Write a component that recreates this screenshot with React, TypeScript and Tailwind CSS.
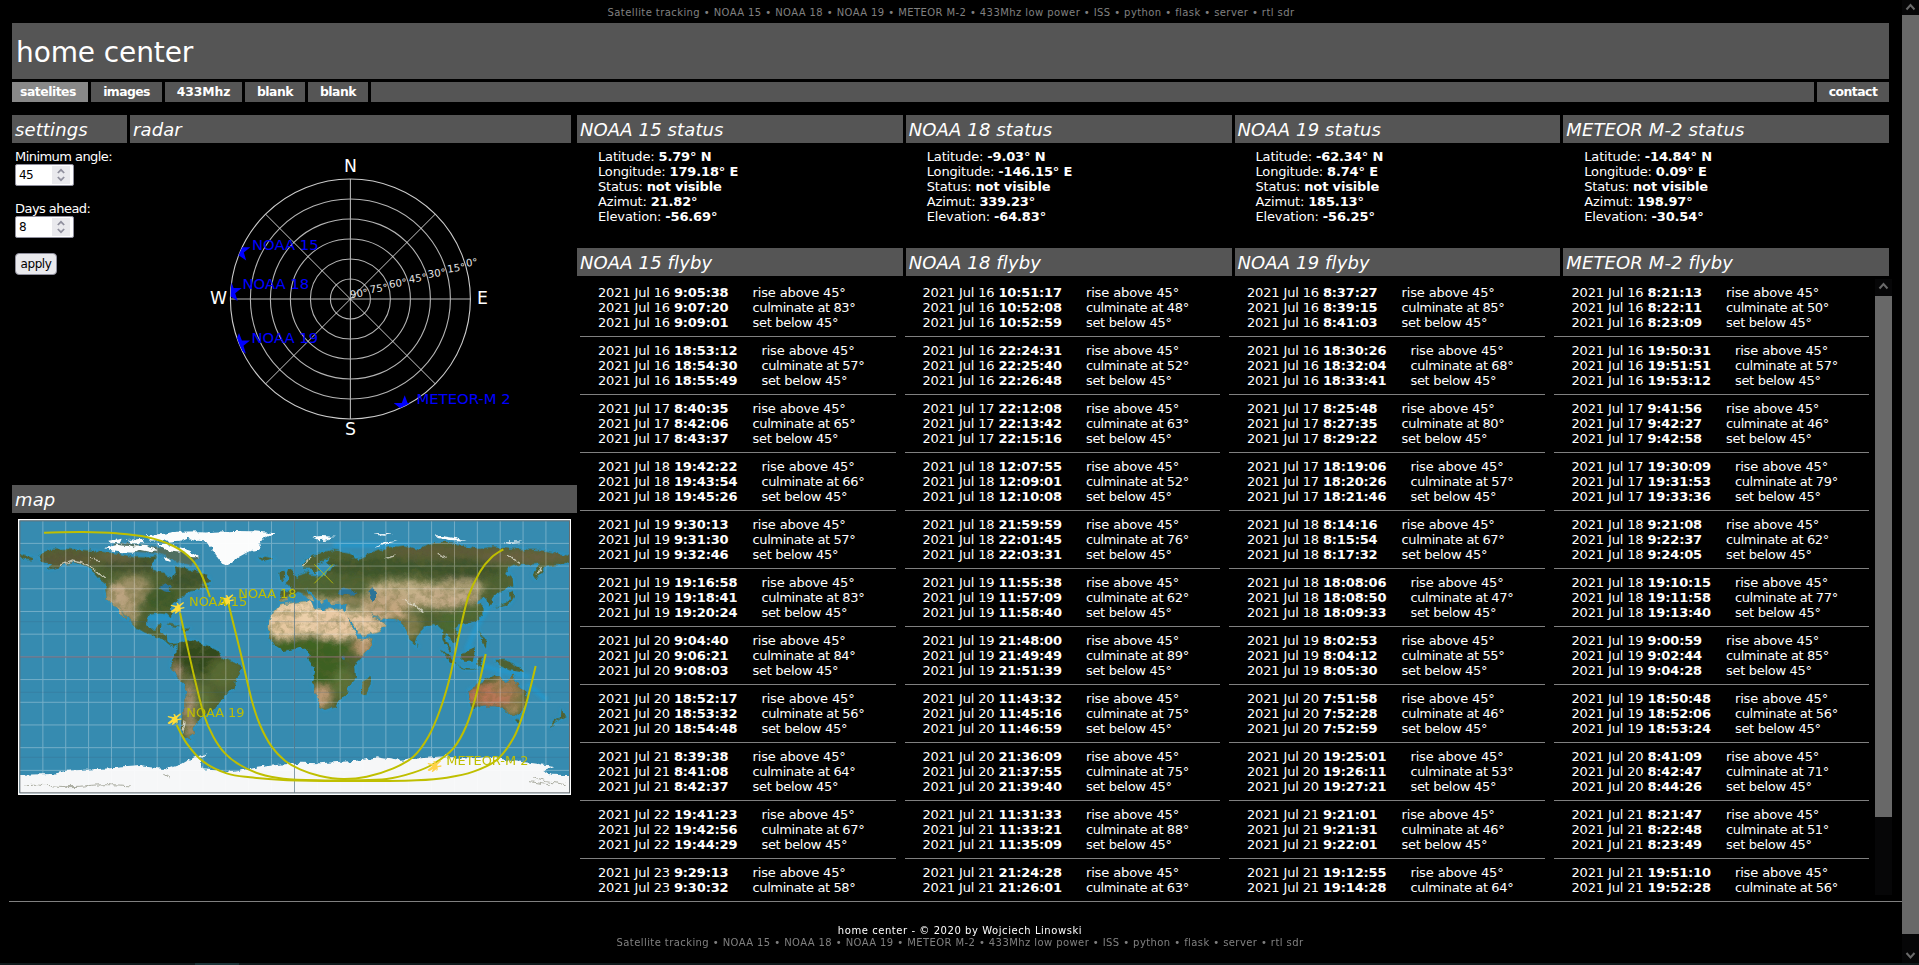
import React from "react";

const TAGS =
  "Satellite tracking • NOAA 15 • NOAA 18 • NOAA 19 • METEOR M-2 • 433Mhz low power • ISS • python • flask • server • rtl sdr";

type Pass = [day: string, rise: string, culminate: string, set: string | null, angle: number];

interface Satellite {
  name: string;
  lat: string;
  lon: string;
  azimut: string;
  elevation: string;
  passes: Pass[];
}

const SATELLITES: Satellite[] = [
  {
    name: "NOAA 15", lat: "5.79", lon: "179.18", azimut: "21.82", elevation: "-56.69",
    passes: [
      ["16", "9:05:38", "9:07:20", "9:09:01", 83],
      ["16", "18:53:12", "18:54:30", "18:55:49", 57],
      ["17", "8:40:35", "8:42:06", "8:43:37", 65],
      ["18", "19:42:22", "19:43:54", "19:45:26", 66],
      ["19", "9:30:13", "9:31:30", "9:32:46", 57],
      ["19", "19:16:58", "19:18:41", "19:20:24", 83],
      ["20", "9:04:40", "9:06:21", "9:08:03", 84],
      ["20", "18:52:17", "18:53:32", "18:54:48", 56],
      ["21", "8:39:38", "8:41:08", "8:42:37", 64],
      ["22", "19:41:23", "19:42:56", "19:44:29", 67],
      ["23", "9:29:13", "9:30:32", null, 58],
    ],
  },
  {
    name: "NOAA 18", lat: "-9.03", lon: "-146.15", azimut: "339.23", elevation: "-64.83",
    passes: [
      ["16", "10:51:17", "10:52:08", "10:52:59", 48],
      ["16", "22:24:31", "22:25:40", "22:26:48", 52],
      ["17", "22:12:08", "22:13:42", "22:15:16", 63],
      ["18", "12:07:55", "12:09:01", "12:10:08", 52],
      ["18", "21:59:59", "22:01:45", "22:03:31", 76],
      ["19", "11:55:38", "11:57:09", "11:58:40", 62],
      ["19", "21:48:00", "21:49:49", "21:51:39", 89],
      ["20", "11:43:32", "11:45:16", "11:46:59", 75],
      ["20", "21:36:09", "21:37:55", "21:39:40", 75],
      ["21", "11:31:33", "11:33:21", "11:35:09", 88],
      ["21", "21:24:28", "21:26:01", null, 63],
    ],
  },
  {
    name: "NOAA 19", lat: "-62.34", lon: "8.74", azimut: "185.13", elevation: "-56.25",
    passes: [
      ["16", "8:37:27", "8:39:15", "8:41:03", 85],
      ["16", "18:30:26", "18:32:04", "18:33:41", 68],
      ["17", "8:25:48", "8:27:35", "8:29:22", 80],
      ["17", "18:19:06", "18:20:26", "18:21:46", 57],
      ["18", "8:14:16", "8:15:54", "8:17:32", 67],
      ["18", "18:08:06", "18:08:50", "18:09:33", 47],
      ["19", "8:02:53", "8:04:12", "8:05:30", 55],
      ["20", "7:51:58", "7:52:28", "7:52:59", 46],
      ["20", "19:25:01", "19:26:11", "19:27:21", 53],
      ["21", "9:21:01", "9:21:31", "9:22:01", 46],
      ["21", "19:12:55", "19:14:28", null, 64],
    ],
  },
  {
    name: "METEOR M-2", lat: "-14.84", lon: "0.09", azimut: "198.97", elevation: "-30.54",
    passes: [
      ["16", "8:21:13", "8:22:11", "8:23:09", 50],
      ["16", "19:50:31", "19:51:51", "19:53:12", 57],
      ["17", "9:41:56", "9:42:27", "9:42:58", 46],
      ["17", "19:30:09", "19:31:53", "19:33:36", 79],
      ["18", "9:21:08", "9:22:37", "9:24:05", 62],
      ["18", "19:10:15", "19:11:58", "19:13:40", 77],
      ["19", "9:00:59", "9:02:44", "9:04:28", 85],
      ["19", "18:50:48", "18:52:06", "18:53:24", 56],
      ["20", "8:41:09", "8:42:47", "8:44:26", 71],
      ["21", "8:21:47", "8:22:48", "8:23:49", 51],
      ["21", "19:51:10", "19:52:28", null, 56],
    ],
  },
];

function Heading({ children, className = "" }: { children: React.ReactNode; className?: string }) {
  return (
    <h2 className={`h-7 shrink-0 overflow-hidden bg-[#555] pl-[3px] text-[18px] leading-[29px] tracking-[0.12px] whitespace-nowrap italic ${className}`}>
      {children}
    </h2>
  );
}

function Tab({ label, className }: { label: string; className: string }) {
  return (
    <a className={`flex h-5 items-center justify-center pt-px text-[12.4px] font-bold ${className}`}>{label}</a>
  );
}

function NumberField({ label, value }: { label: string; value: string }) {
  return (
    <label className="flex flex-col items-start">
      <span className="h-[15px] leading-[15px] tracking-[-0.55px] whitespace-nowrap">{label}</span>
      <span className="flex h-[22px] w-[59px] items-center justify-between rounded-[2px] border border-[#8f8f9d] bg-white pr-[3px] pl-[3px] text-black">
        <span className="text-[12px] tracking-[-0.6px]">{value}</span>
        <span className="flex h-[18px] w-[18px] items-center justify-center bg-[#e9e9ed]">
          <svg viewBox="0 0 18 18" className="h-[18px] w-[18px]" fill="none" stroke="#8f8f9d" strokeWidth="1.7">
            <path d="M5.8 7 9 3.8 12.2 7M5.8 11 9 14.2 12.2 11" />
          </svg>
        </span>
      </span>
    </label>
  );
}

const STAR =
  "M0,-11.4 2.9,-3.8 11,-3.7 4.5,1.5 6.9,9.4 0,4.7 -6.9,9.4 -4.5,1.5 -11,-3.7 -2.9,-3.8Z";

function Radar() {
  const cx = 220.4;
  const cy = 156;
  const marks: [number, number, string][] = [
    [220.5, 155.2, "90°"], [240.3, 150.2, "75°"], [259.5, 145, "60°"],
    [279.3, 140, "45°"], [298.3, 135, "30°"], [317.8, 129.7, "15°"], [336.6, 123.8, "0°"],
  ];
  return (
    <svg viewBox="0 0 441 342" className="h-[342px] w-[441px] tracking-normal" fontFamily="DejaVu Sans">
      <defs>
        <clipPath id="dial"><circle cx={cx} cy={cy} r="120" /></clipPath>
      </defs>
      <g fill="none" stroke="#b4b4b4" strokeWidth="1.1">
        {[20, 40, 60, 80, 100].map((r) => <circle key={r} cx={cx} cy={cy} r={r} />)}
        <path d={`M${cx - 120},${cy}H${cx + 120}M${cx},${cy - 120}V${cy + 120}`} />
        <path d={`M${cx - 85},${cy - 85}l170,170M${cx - 85},${cy + 85}l170,-170`} stroke="#ddd" strokeWidth="0.9" />
        <circle cx={cx} cy={cy} r="120" stroke="#ccc" />
      </g>
      <g fill="#fff" fontSize="17.3" textAnchor="middle">
        <text x={cx} y="29">N</text>
        <text x={cx} y="292">S</text>
        <text x="88.5" y="160.5">W</text>
        <text x="352.5" y="160.5">E</text>
      </g>
      <g fill="#e6e6e6" fontSize="10.2">
        {marks.map(([x, y, t]) => (
          <text key={t} x={x} y={y} transform={`rotate(-8 ${x} ${y})`}>{t}</text>
        ))}
      </g>
      <g fill="#0000ff" clipPath="url(#dial)">
        <path d={STAR} transform="translate(109.3 108)" />
        <path d={STAR} transform="translate(100.7 148.7)" />
        <path d={STAR} transform="translate(109 201.3)" />
        <path d={STAR} transform="translate(274.7 263.7)" />
      </g>
      <g fill="#0000ff" fontSize="14.8">
        <text x="122" y="107">NOAA 15</text>
        <text x="112.5" y="145.7">NOAA 18</text>
        <text x="121.5" y="199.5">NOAA 19</text>
        <text x="286.5" y="261.3">METEOR-M 2</text>
      </g>
    </svg>
  );
}

function smooth(points: number[][]) {
  let d = `M${points[0][0]},${points[0][1]}`;
  for (let i = 0; i < points.length - 1; i++) {
    const p0 = points[Math.max(i - 1, 0)];
    const p1 = points[i];
    const p2 = points[i + 1];
    const p3 = points[Math.min(i + 2, points.length - 1)];
    d += `C${p1[0] + (p2[0] - p0[0]) / 6},${p1[1] + (p2[1] - p0[1]) / 6} ${p2[0] - (p3[0] - p1[0]) / 6},${p2[1] - (p3[1] - p1[1]) / 6} ${p2[0]},${p2[1]}`;
  }
  return d;
}

const ORBITS: number[][][] = [
  [[132, 188], [250, 186], [350, 190], [440, 201], [520, 228], [575, 268], [605, 315], [630, 381]],
  [[540, 428], [560, 520], [585, 630], [612, 735], [640, 800], [675, 850], [720, 885], [780, 912], [850, 926], [950, 931], [1060, 931], [1160, 927], [1240, 908], [1300, 882], [1360, 835], [1400, 765], [1430, 670], [1457, 552]],
  [[685, 400], [722, 550], [755, 690], [780, 765], [815, 830], [855, 872], [900, 898], [960, 918], [1030, 927], [1100, 920], [1180, 895], [1240, 860], [1285, 800], [1320, 720], [1350, 620], [1378, 490], [1405, 380], [1440, 305], [1475, 262], [1510, 238]],
  [[530, 765], [560, 820], [610, 875], [680, 910], [750, 922], [850, 930], [1000, 933], [1150, 933], [1250, 931], [1340, 923], [1420, 905], [1490, 870], [1540, 805], [1570, 730], [1592, 650], [1607, 588]],
];

const WEST_LAND =
  "M118,262 125,250 150,240 195,237 240,240 285,243 320,248 360,252 400,262 440,262 475,258 455,280 458,300 490,312 515,325 528,308 525,285 545,290 575,302 600,305 625,320 630,335 600,345 630,348 600,357 570,365 545,380 520,398 508,412 515,430 513,445 500,432 475,430 450,433 440,445 438,465 450,480 462,478 470,465 485,462 480,480 478,490 500,493 502,510 515,522 532,520 525,530 505,522 490,508 465,498 435,488 405,470 385,445 365,415 357,402 372,430 380,450 362,435 348,410 338,400 320,385 316,360 318,340 300,328 285,310 265,293 240,282 215,275 190,285 165,295 140,298 145,290 155,282 125,274Z" +
  "M530,520 548,512 575,511 600,518 628,530 655,545 665,565 695,574 722,588 722,602 706,628 700,655 672,675 655,700 635,725 613,735 600,745 590,765 578,775 583,790 566,800 575,812 548,800 544,780 550,740 556,700 558,660 550,640 530,622 514,592 516,570 530,548Z" +
  "M60,250 100,262 90,268 60,262Z M500,460 530,465 545,472 515,468Z M545,474 568,476 560,482 545,480Z" +
  "M838,312 855,305 856,325 842,331Z M865,295 878,300 890,330 862,337 868,322 860,310Z M775,264 795,260 820,265 800,274 778,270Z" +
  "M805,480 808,450 830,420 845,402 880,398 930,393 937,410 970,422 985,413 1025,420 1037,432 1060,477 1082,508 1118,508 1110,532 1085,562 1065,585 1068,622 1045,647 1040,670 1020,690 1008,708 975,719 963,713 952,688 938,642 945,610 945,590 925,565 927,545 910,532 890,535 850,541 825,525 808,500Z" +
  "M1085,670 1088,642 1108,620 1112,638 1098,676Z";

const EAST_LAND =
  "M-30,395 -28,365 2,362 -5,345 -15,340 10,330 25,318 50,310 50,300 58,318 85,320 110,315 115,300 130,290 145,288 122,285 108,277 122,262 100,268 82,285 90,300 75,312 62,295 42,295 36,280 60,262 90,248 130,240 175,247 200,262 180,270 210,265 240,252 270,240 300,232 345,226 385,238 420,220 470,218 510,224 560,238 600,232 650,235 700,238 760,242 800,250 838,258 838,275 805,285 765,290 755,305 737,328 728,315 740,295 750,280 715,284 680,285 655,295 645,308 668,325 665,345 645,355 625,372 605,382 606,402 595,405 588,385 565,388 560,398 577,405 577,430 560,450 530,462 505,462 493,475 505,498 492,517 478,508 468,490 465,502 488,548 478,540 460,508 460,480 445,465 430,462 408,470 390,488 380,500 372,524 360,508 345,470 320,447 285,445 255,440 237,425 250,442 272,450 287,460 268,485 215,500 200,478 180,450 160,428 172,404 150,400 120,402 110,388 95,400 80,385 55,360 45,360 60,375 75,390 60,392 38,370 20,365 -5,378 -12,393Z" +
  "M610,415 638,402 660,392 657,370 668,362 672,380 660,402 632,408Z M662,315 668,325 670,350 662,340Z" +
  "M452,538 475,552 500,585 480,575Z M512,552 535,545 553,530 556,550 548,575 520,575Z M562,562 580,558 570,572 578,590 562,580Z M498,588 530,592 565,598 530,598Z M568,480 576,500 590,512 588,532 574,512Z M615,570 645,570 690,590 700,608 660,600 628,585Z" +
  "M535,660 560,645 590,628 610,618 635,618 638,630 655,642 665,612 680,640 705,662 712,690 698,725 688,737 660,732 635,712 615,705 580,706 552,717 542,708 540,690Z" +
  "M675,747 692,749 684,761Z M815,720 830,738 800,756 778,772 790,755 812,745Z M379,520 386,530 380,533Z";

const ANTARCTICA =
  "M30,915 160,912 200,902 300,897 420,888 500,898 540,885 575,865 622,850 602,868 608,898 700,905 760,895 830,885 900,878 960,880 1070,872 1130,862 1200,872 1270,864 1340,858 1370,866 1430,864 1480,860 1530,872 1600,880 1660,888 1630,900 1655,914 1740,916 1740,1000 30,1000Z";

const ICE =
  "M552,200 590,190 640,185 700,183 760,184 822,190 790,205 775,225 780,238 745,245 715,262 686,287 665,280 652,262 645,245 630,232 618,214 590,212Z" +
  "M465,196 530,185 605,184 612,190 570,200 540,212 500,215Z M440,196 480,192 500,205 455,212Z M325,212 365,206 360,220 330,218Z M315,234 350,225 385,228 420,238 400,248 345,245Z M380,210 430,206 435,220 395,220Z M400,226 440,228 470,240 450,246 410,238Z M470,222 500,222 540,232 570,242 598,262 575,262 545,245 500,240Z M485,265 510,262 512,275 495,272Z" +
  "M935,200 965,198 1005,200 985,208 960,211Z M1125,235 1150,218 1196,212 1150,224Z M1120,193 1180,192 1150,197Z M1305,195 1360,203 1400,215 1350,213 1315,206Z M1505,217 1570,218 1530,222Z";

type Patch = [x: number, y: number, rx: number, ry: number, color: string, opacity: number];

const TERRAIN: Patch[] = [
  [210, 268, 95, 26, "#5b5638", 0.9], [400, 360, 55, 45, "#a4936b", 0.9], [350, 390, 34, 52, "#c0a684", 0.95], [390, 425, 25, 40, "#b29d78", 0.9],
  [400, 285, 100, 22, "#41502f", 0.9], [560, 325, 60, 30, "#3a522c", 0.9], [480, 385, 50, 35, "#3c5a27", 0.9], [350, 260, 60, 14, "#736849", 0.8],
  [600, 560, 75, 55, "#2e4a1d", 0.95], [670, 610, 45, 45, "#5a6b33", 0.9], [600, 690, 40, 40, "#5f743c", 0.8], [566, 700, 16, 75, "#ae9279", 0.95], [575, 780, 18, 35, "#a5906f", 0.95], [530, 605, 16, 28, "#a88970", 0.9],
  [920, 440, 130, 58, "#ecd0ab", 1], [1010, 460, 75, 50, "#e8c9a4", 1], [850, 465, 50, 45, "#e6c8a0", 1], [930, 530, 140, 28, "#3f6425", 0.95],
  [975, 595, 60, 60, "#3b6124", 0.95], [1090, 530, 32, 30, "#bd9871", 0.95], [965, 680, 32, 36, "#c09b76", 0.95], [1030, 640, 35, 45, "#5d7438", 0.85], [1095, 650, 14, 30, "#6f7541", 0.9],
  [1100, 460, 60, 48, "#e6c7a1", 1], [1150, 415, 50, 34, "#bfa07b", 1], [1040, 392, 55, 12, "#a59168", 0.9], [1210, 355, 110, 24, "#c0ae85", 1], [1160, 395, 75, 34, "#c1a681", 0.95], [1190, 430, 32, 22, "#c6a77f", 1],
  [1330, 385, 110, 30, "#c5ab88", 1], [1260, 390, 50, 25, "#c9b18d", 0.9], [1380, 350, 75, 24, "#b8a680", 0.9], [1235, 465, 28, 40, "#8b8354", 0.85], [1410, 425, 45, 30, "#4f6933", 0.9], [1350, 460, 35, 35, "#4b6b30", 0.8],
  [1330, 245, 180, 22, "#5f5a38", 0.85], [1570, 260, 140, 22, "#6d6142", 0.85], [1130, 290, 170, 26, "#38522a", 0.85], [1380, 300, 120, 30, "#38502a", 0.85], [940, 335, 60, 30, "#4c6632", 0.8],
  [1475, 675, 80, 36, "#b87456", 1], [1520, 650, 50, 30, "#a88057", 0.85], [1555, 700, 22, 36, "#8d7c4b", 0.85], [1535, 718, 20, 14, "#b5946a", 0.9],
];

const CRAFT =
  "M-21,10 -10,2 -7,-2 -21,-7 -20,-10 -5,-7 -1,-8 -4,-16 1,-15 4,-9 17,-18 19,-15 8,-5 8,-1 20,-3 20,1 9,3 9,11 5,14 6,8 -6,17 -9,16 -5,8 -15,14 -20,13Z";

function WorldMap() {
  const cols = Array.from({ length: 23 }, (_, i) => 60 + 68.6 * (i + 1));
  const rows = Array.from({ length: 11 }, (_, i) => 152 + 68.1 * (i + 1));
  return (
    <svg viewBox="54 147 1659 828" className="h-[276px] w-[553px] tracking-normal" fontFamily="DejaVu Sans">
      <defs>
        <clipPath id="frame"><rect x="60" y="153" width="1648" height="815" /></clipPath>
        <clipPath id="land">
          <path d={WEST_LAND} />
          <path d={EAST_LAND} transform="translate(870 0)" />
        </clipPath>
        <filter id="soft" x="-20%" y="-20%" width="140%" height="140%"><feGaussianBlur stdDeviation="9" /></filter>
        <filter id="shelf" x="-5%" y="-5%" width="110%" height="110%"><feGaussianBlur stdDeviation="5" /></filter>
        <filter id="coast" x="0" y="0" width="100%" height="100%">
          <feTurbulence type="fractalNoise" baseFrequency="0.05" numOctaves="4" seed="4" result="n" />
          <feDisplacementMap in="SourceGraphic" in2="n" scale="17" xChannelSelector="R" yChannelSelector="G" />
        </filter>
        <filter id="relief" x="0" y="0" width="100%" height="100%">
          <feTurbulence type="fractalNoise" baseFrequency="0.04 0.05" numOctaves="5" seed="9" />
          <feColorMatrix values="0 0 0 0 0.12  0 0 0 0 0.13  0 0 0 0 0.03  2.6 0 0 0 -1.05" />
        </filter>
      </defs>
      <rect x="54" y="147" width="1659" height="828" fill="#fff" />
      <rect x="58.5" y="151.5" width="1651" height="818" fill="#368bb0" />
      <g clipPath="url(#frame)">
        <g fill="none" stroke="#1f9bd4" strokeWidth="7" opacity="0.6" filter="url(#shelf)">
          <path d={WEST_LAND} />
          <path d={EAST_LAND} transform="translate(870 0)" />
          <path d="M1000,225H1230M1370,560 1490,600 1590,620M1470,400 1430,470 1400,540M1580,640 1640,690M430,445H520" strokeWidth="16" />
        </g>
        <g filter="url(#coast)">
          <path d="M340,222 385,218 460,232 540,238 600,262 570,285 530,275 480,252 420,246 350,246Z" fill="#596547" opacity="0.75" />
          <g clipPath="url(#land)">
            <rect x="54" y="147" width="1659" height="828" fill="#4e6232" />
            <g filter="url(#soft)">
              {TERRAIN.map(([x, y, rx, ry, color, opacity], i) => (
                <ellipse key={i} cx={x} cy={y} rx={rx} ry={ry} fill={color} opacity={opacity} />
              ))}
            </g>
            <rect x="54" y="147" width="1659" height="828" filter="url(#relief)" opacity="0.38" />
            <path d="M180,287 215,273 245,279 280,297 315,325M1310,250 1340,262M1520,255 1560,280M1160,265 1190,255M548,790 556,755M1610,310 1625,295M905,290 935,262M300,275 270,265M1210,390 1240,402 1270,425" fill="none" stroke="#f0eee4" strokeWidth="4" opacity="0.7" />
          </g>
          <path d="M1016,370 1026,352 1052,360 1077,369 1050,377Z M1105,364 1118,352 1128,366 1128,390 1114,392 1108,377Z M475,352 500,342 520,352 500,356 512,368 490,362Z M1028,563h9v9h-9z" fill="#2b7397" />
          <path d={ICE} fill="#fbfcfc" />
          <path d={ANTARCTICA} fill="#f6f7f8" />
          <path d="M70,948C140,940 180,955 250,948S360,945 390,948M490,910 510,924M1600,925 1640,935 1700,944M1590,935 1650,945" stroke="#a9ab9f" strokeWidth="3" fill="none" />
        </g>
        <g stroke="#fff" strokeWidth="3" opacity="0.3">
          {cols.map((x) => <path key={x} d={`M${x},152V969`} />)}
          {rows.map((y) => <path key={y} d={`M60,${y}H1708`} />)}
        </g>
        <path d="M60,561H1708" stroke="#7d4b58" strokeWidth="3" opacity="0.75" />
        <path d="M883.5,152V969" stroke="#3d5e70" strokeWidth="3" opacity="0.6" />
        <path d="M60,455H1708M60,667H1708M60,862H1708" stroke="#3c5f80" strokeWidth="2" opacity="0.35" />
      </g>
      <rect x="59.5" y="152.5" width="1649" height="816" fill="none" stroke="#666d70" strokeWidth="3" />
      <g fill="none" stroke="#bfbf00" strokeWidth="6">
        {ORBITS.map((points, i) => <path key={i} d={smooth(points)} />)}
        <path d="M943,283l56,57M999,283l-56,57" strokeWidth="2.6" />
      </g>
      <g fill="#fedc38">
        <path d={CRAFT} transform="translate(533 414)" />
        <path d={CRAFT} transform="translate(681 391)" />
        <path d={CRAFT} transform="translate(524 748)" />
        <path d={CRAFT} transform="translate(1304 889)" fill="#ffd24a" />
      </g>
      <g fill="#bfbf00" fontSize="38.8">
        <text x="567" y="408">NOAA 15</text>
        <text x="715" y="383">NOAA 18</text>
        <text x="559" y="740">NOAA 19</text>
        <text x="1339" y="884">METEOR-M 2</text>
      </g>
    </svg>
  );
}

function Status({ sat }: { sat: Satellite }) {
  return (
    <section className="min-w-0 flex-1">
      <Heading>{sat.name} status</Heading>
      <div className="pt-[6px] pl-[21px] leading-[15px]">
        <p>Latitude: <b>{sat.lat}° N</b></p>
        <p>Longitude: <b>{sat.lon}° E</b></p>
        <p>Status: <b>not visible</b></p>
        <p>Azimut: <b>{sat.azimut}°</b></p>
        <p>Elevation: <b>{sat.elevation}°</b></p>
      </div>
    </section>
  );
}

function Flybys({ sat }: { sat: Satellite }) {
  return (
    <div className="flex min-w-0 flex-1 flex-col gap-[6px] pr-[6px] pl-[3px]">
      {sat.passes.map(([day, rise, culminate, set, angle], i) => {
        const steps = [
          [rise, "rise above 45°", "tracking-[-0.12px]"],
          [culminate, `culminate at ${angle}°`, "tracking-[-0.38px]"],
        ];
        if (set) steps.push([set, "set below 45°", "tracking-[-0.3px]"]);
        return (
          <div key={i} className={`pl-[18px] leading-[15px] whitespace-nowrap ${set ? "h-[52px] border-b border-[#808080]" : "h-[30px]"}`}>
            {steps.map(([time, what, spacing]) => (
              <p key={what} className="h-[15px]">
                2021 Jul {day} <b>{time}</b>
                <span className={`ml-6 ${spacing}`}>{what}</span>
              </p>
            ))}
          </div>
        );
      })}
    </div>
  );
}

function Arrow({ down = false }: { down?: boolean }) {
  return (
    <svg viewBox="0 0 17 15" className="h-[15px] w-[17px] shrink-0" fill="none" stroke="#6a6a6a" strokeWidth="2">
      <path d={down ? "M4.5 5 8.5 9.5 12.5 5" : "M4.5 9.5 8.5 5 12.5 9.5"} />
    </svg>
  );
}

export default function App() {
  return (
    <div className="flex h-[965px] w-[1919px] flex-col overflow-hidden bg-black font-['DejaVu_Sans',sans-serif] text-[13px] tracking-[-0.15px] text-white">
      <div className="flex h-[963px]">
        <div className="flex w-[1902px] flex-col">
          <p className="h-[23px] pt-[6px] text-center text-[10px] leading-[13px] tracking-[0.42px] text-[#808080]">{TAGS}</p>
          <header className="mr-[13px] ml-3 h-14 bg-[#555] pl-[4px] text-[28px] leading-[59px] tracking-[-0.1px]">home center</header>
          <nav className="mt-[3px] mr-[13px] ml-3 flex gap-[3px]">
            <Tab label="satelites" className="w-[76px] bg-[#888] pr-[4px] tracking-[-0.5px]" />
            <Tab label="images" className="w-[71px] bg-[#555] tracking-[-0.6px]" />
            <Tab label="433Mhz" className="w-[77px] bg-[#555] tracking-[-0.1px]" />
            <Tab label="blank" className="w-[60px] bg-[#555] tracking-[-0.5px]" />
            <Tab label="blank" className="w-[60px] bg-[#555] tracking-[-0.5px]" />
            <span className="h-5 flex-1 bg-[#555]" />
            <Tab label="contact" className="w-[72px] bg-[#555] tracking-[-0.5px]" />
          </nav>

          <main className="mt-[13px] ml-3 flex h-[780px]">
            <div className="w-[565px]">
              <div className="flex h-[370px] gap-[3px]">
                <section className="w-[115px]">
                  <Heading>settings</Heading>
                  <form className="flex flex-col items-start gap-[15px] pt-[6px] pl-[3px]">
                    <NumberField label="Minimum angle:" value="45" />
                    <NumberField label="Days ahead:" value="8" />
                    <button type="button" className="flex h-[22px] w-[42px] items-center justify-center rounded-[4px] border border-[#8f8f9d] bg-[#e9e9ed] pb-px text-[12px] tracking-[-0.4px] text-black">apply</button>
                  </form>
                </section>
                <section className="w-[441px]">
                  <Heading>radar</Heading>
                  <Radar />
                </section>
              </div>
              <Heading>map</Heading>
              <div className="pt-[6px] pl-[6px]"><WorldMap /></div>
            </div>

            <div className="flex w-[1315px] flex-col">
              <div className="mr-[3px] flex h-[133px] gap-[3px]">
                {SATELLITES.map((s) => <Status key={s.name} sat={s} />)}
              </div>
              <div className="mr-[3px] flex gap-[3px]">
                {SATELLITES.map((s) => <Heading key={s.name} className="min-w-0 flex-1">{s.name} flyby</Heading>)}
              </div>
              <div className="mt-[3px] flex h-[616px]">
                <div className="flex flex-1 pt-[6px]">
                  {SATELLITES.map((s) => <Flybys key={s.name} sat={s} />)}
                </div>
                <div className="flex w-[17px] flex-col bg-[#060607]">
                  <Arrow />
                  <div className="mt-[2px] h-[521px] bg-[#686868]" />
                </div>
              </div>
            </div>
          </main>

          <footer className="mt-[6px] ml-[9px] flex flex-col items-center border-t border-[#808080] pt-[23px] pl-[9px] text-[10px] leading-[11.5px]">
            <p className="tracking-[0.56px]">home center - © 2020 by Wojciech Linowski</p>
            <p className="tracking-[0.42px] text-[#808080]">{TAGS}</p>
          </footer>
        </div>
        <div className="flex w-[17px] flex-col bg-[#060607]">
          <Arrow />
          <div className="mb-auto h-[919px] bg-[#686868]" />
          <Arrow down />
        </div>
      </div>
      <div className="flex h-[2px] bg-[#10191b] pl-[195px]">
        <div className="w-11 bg-[#1c3337]" />
      </div>
    </div>
  );
}
